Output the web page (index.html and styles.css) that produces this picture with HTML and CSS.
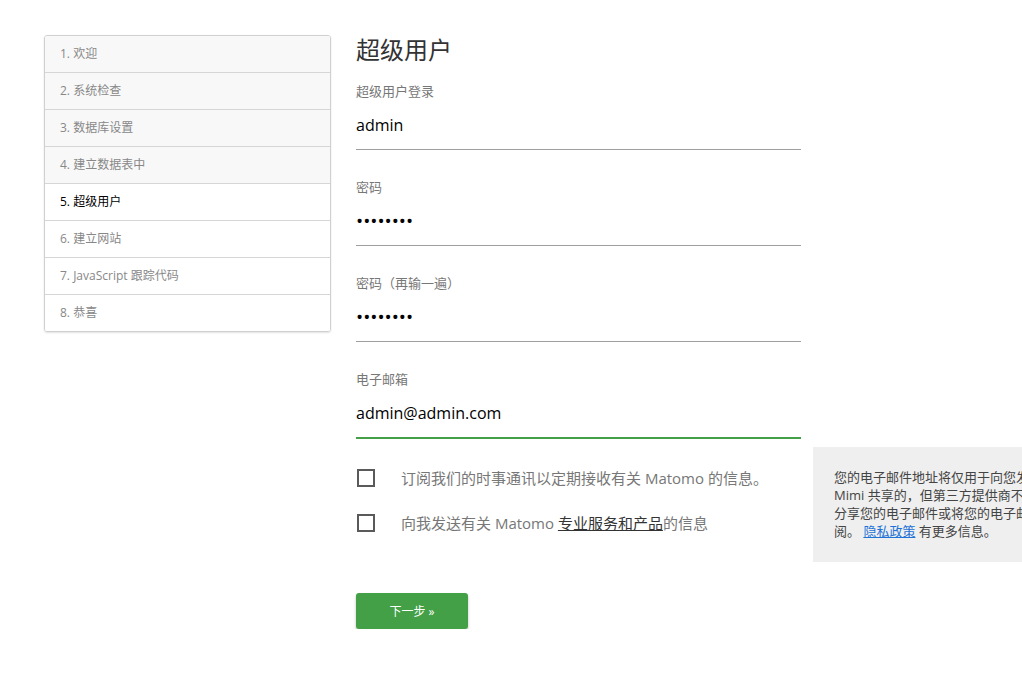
FILE: index.html
```html
<!DOCTYPE html>
<html lang="zh-CN">
<head>
  <meta charset="UTF-8" />
  <title>超级用户 - Matomo 安装</title>
  <link rel="stylesheet" href="styles.css">
</head>
<body>
  <div class="page">
    <ul class="steps">
      <li class="done">1. 欢迎</li>
      <li class="done">2. 系统检查</li>
      <li class="done">3. 数据库设置</li>
      <li class="done">4. 建立数据表中</li>
      <li class="current">5. 超级用户</li>
      <li>6. 建立网站</li>
      <li>7. JavaScript 跟踪代码</li>
      <li>8. 恭喜</li>
    </ul>

    <div class="content">
      <h1>超级用户</h1>

      <div class="field">
        <label for="login">超级用户登录</label>
        <input type="text" id="login" value="admin" />
      </div>
      <div class="field">
        <label for="password">密码</label>
        <input type="password" id="password" value="admin123" />
      </div>
      <div class="field">
        <label for="password2">密码（再输一遍）</label>
        <input type="password" id="password2" value="admin123" />
      </div>
      <div class="field last">
        <label for="email">电子邮箱</label>
        <input type="email" id="email" class="active" value="admin@admin.com" />
      </div>

      <div class="options">
        <div class="checks">
          <label class="check"><span class="box"></span>订阅我们的时事通讯以定期接收有关 Matomo 的信息。</label>
          <label class="check"><span class="box"></span>向我发送有关 Matomo&nbsp;<a href="#" class="dark">专业服务和产品</a>的信息</label>
        </div>
        <div class="note">
          <span>您的电子邮件地址将仅用于向您发送新闻，</span>
          <span>Mimi 共享的，但第三方提供商不会</span>
          <span>分享您的电子邮件或将您的电子邮件</span>
          <span>阅。 <a href="#">隐私政策</a> 有更多信息。</span>
        </div>
      </div>

      <button class="next">下一步 »</button>
    </div>
  </div>
</body>
</html>
```

FILE: styles.css
```css
body {
  margin: 0;
  font-family: "Open Sans", "Noto Sans CJK SC", sans-serif;
  color: #333;
  background: #fff;
}
.page {
  display: flex;
  align-items: flex-start;
  gap: 25px;
  padding: 34px 0 0 44px;
  overflow: hidden;
}
.steps {
  list-style: none;
  margin: 1px 0 0;
  padding: 0;
  width: 285px;
  flex: none;
  border: 1px solid #d0d0d0;
  border-radius: 3px;
  box-shadow: 0 1px 2px rgba(0, 0, 0, 0.12);
  overflow: hidden;
}
.steps li {
  height: 36px;
  line-height: 36px;
  padding-left: 15px;
  font-size: 12px;
  color: #888;
  background: #fff;
  border-bottom: 1px solid #d6d6d6;
}
.steps li:last-child {
  border-bottom: none;
}
.steps li.done {
  background: #f8f8f8;
}
.steps li.current {
  color: #000;
}
.content {
  width: 445px;
  flex: none;
}
h1 {
  margin: 0 0 15px;
  font-size: 24px;
  line-height: 32px;
  font-weight: normal;
  color: #333;
}
.field {
  margin-bottom: 27px;
}
.field.last {
  margin-bottom: 8px;
}
.field label {
  display: block;
  font-size: 13px;
  line-height: 20px;
  color: #777;
}
.field input {
  display: block;
  box-sizing: border-box;
  width: 100%;
  height: 49px;
  margin: 0;
  padding: 0;
  border: none;
  border-bottom: 1px solid #9e9e9e;
  outline: none;
  font-family: inherit;
  font-size: 16px;
  color: #000;
  background: transparent;
}
.field input[type="password"] {
  font-size: 19px;
}
.field input.active {
  height: 50px;
  border-bottom: 2px solid #43a047;
}
.options {
  display: flex;
  align-items: flex-start;
  width: 730px;
}
.checks {
  width: 445px;
  flex: none;
  padding-top: 8px;
}
.check {
  display: flex;
  align-items: center;
  height: 45px;
  font-size: 15px;
  color: #777;
  white-space: nowrap;
}
.box {
  width: 14px;
  height: 14px;
  margin: 0 26px 0 1px;
  border: 2px solid #5a5a5a;
  flex: none;
}
a.dark {
  color: #333;
  text-decoration: underline;
}
.note {
  margin-left: 12px;
  width: 260px;
  flex: none;
  padding: 21px 21px 22px;
  background: #efefef;
  font-size: 13px;
  line-height: 18px;
  color: #444;
}
.note span {
  display: block;
  white-space: nowrap;
}
.note a {
  color: #1e73d6;
  text-decoration: underline;
}
.next {
  margin-top: 31px;
  width: 112px;
  height: 36px;
  border: none;
  border-radius: 3px;
  background: #43a047;
  color: #fff;
  font-family: inherit;
  font-size: 12px;
  box-shadow: 0 2px 3px rgba(0, 0, 0, 0.25);
  cursor: pointer;
}
```
